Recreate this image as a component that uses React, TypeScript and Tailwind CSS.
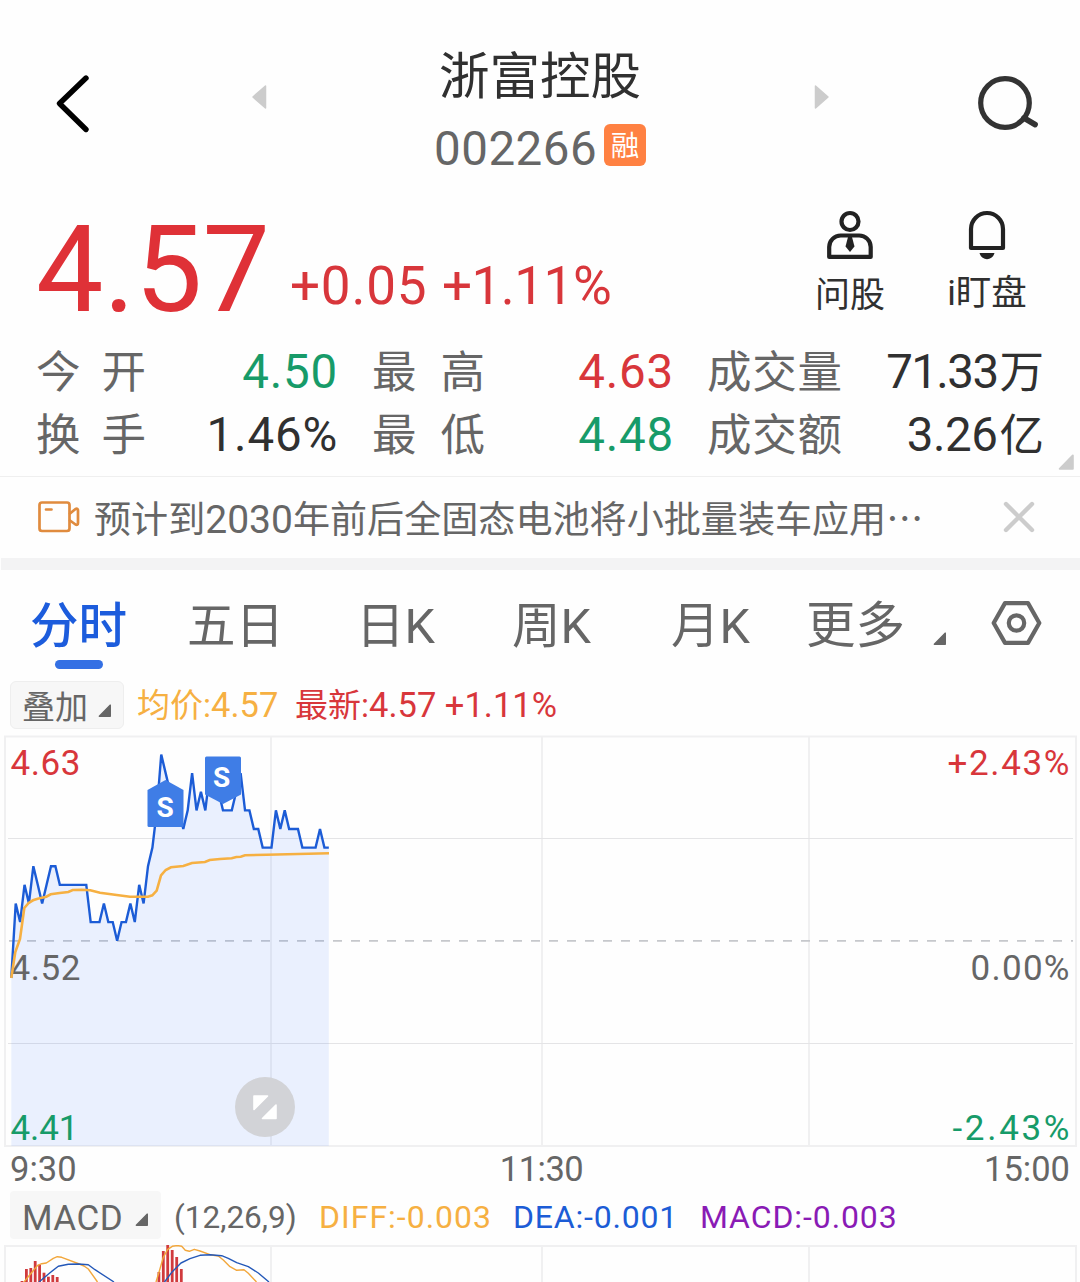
interface Stat {
  label: string
  value: string
  unit?: string
  style: string
}

const STATS: Stat[][] = [
  [
    { label: '今开', value: '4.50', style: 'text-[#179b69] tracking-[0.8px] mr-[-1px]' },
    { label: '最高', value: '4.63', style: 'text-[#d8363b] tracking-[0.8px] mr-[-1px]' },
    { label: '成交量', value: '71.33', unit: '万', style: 'text-[#303030] tracking-[-1.6px]' },
  ],
  [
    { label: '换手', value: '1.46%', style: 'text-[#303030] tracking-[0.8px] mr-[-1px]' },
    { label: '最低', value: '4.48', style: 'text-[#179b69] tracking-[0.8px] mr-[-1px]' },
    { label: '成交额', value: '3.26', unit: '亿', style: 'text-[#303030] tracking-[-0.5px]' },
  ],
]

const COLUMNS = [
  'w-[301px]',
  'ml-[35px] w-[301px]',
  'ml-[34px] w-[337px]',
]

const TABS = [
  { name: '五日', width: 'w-[169px]' },
  { name: '日K', width: 'w-[156px]' },
  { name: '周K', width: 'w-[159px]' },
  { name: '月K', width: 'w-[154px]' },
]

// price ticks (0.01) relative to the previous close, one per minute
const PREV_CLOSE = 4.52
const TICKS = [
  -2, 2, 1, 3, 2, 4, 3, 2, 3, 4, 4, 3, 3, 3, 3, 3, 3, 3, 1, 1, 1, 2, 1, 1, 0,
  1, 1, 2, 1, 3, 2, 4, 5, 7, 10, 9, 8, 7, 7, 6, 7, 9, 7, 8, 7, 9, 9, 8, 7, 7,
  7, 8, 9, 7, 7, 6, 6, 5, 5, 5, 7, 6, 7, 6, 6, 6, 5, 5, 5, 5, 6, 5, 5,
]
const STEP = 4.41
const TICK_H = 18.62
const ZERO_Y = 940.7

const pricePoints = TICKS.map((t, i) => `${11.3 + i * STEP},${ZERO_Y - t * TICK_H}`).join(' ')
const lastX = 11.3 + (TICKS.length - 1) * STEP

const AVG_POINTS =
  '11.3,978 15.3,952 20,939 24.3,908 28.7,903 33,900.3 37.7,898.7 46.3,896.7 50.7,894.3 59.7,893 68.3,892 72.7,890 81.7,889.7 90.3,890.3 100,892.7 116.7,895 130,896.7 148,896.7 152.3,895.3 156.7,890.7 161,875.3 165.7,870 171,867.3 183.3,866 192,863 205,862 209.7,860 220,859 231.7,858.3 236.3,857 240.7,856.7 245,855.3 266.7,854.7 329,853.3'

const MACD_BARS = [
  [22, 1281], [26.4, 1269], [30.8, 1268], [35.2, 1261], [39.6, 1264.7], [44, 1272.7],
  [48.4, 1276.7], [52.8, 1275], [57.2, 1277], [158.9, 1272], [163.3, 1251], [167.7, 1245],
  [172.2, 1250], [176.7, 1257], [181.3, 1269],
]

const GRID_X = [271, 542, 809]

function Corner({ className, color = '#666' }: { className?: string; color?: string }) {
  return (
    <svg className={className} width="14" height="14" viewBox="0 0 14 14">
      <path d="M12.2 1.2v11H1.4z" fill={color} stroke={color} strokeWidth="1.6" strokeLinejoin="round" />
    </svg>
  )
}

function Header() {
  return (
    <header className="flex h-[196px] items-start">
      <button className="ml-[52px] mt-[70px]">
        <svg width="42" height="68" viewBox="52 70 42 68" fill="none">
          <path d="M86 78 59.5 103.500 86 129.500" stroke="#000" strokeWidth="5.4" strokeLinecap="round" strokeLinejoin="round" />
        </svg>
      </button>
      <svg className="ml-[157px] mt-[84px]" width="16" height="26" viewBox="0 0 16 26">
        <path d="M14.500 2v22L2 13z" fill="#ccc" stroke="#ccc" strokeWidth="1.500" strokeLinejoin="round" />
      </svg>
      <div className="ml-[167px] flex w-[212px] flex-col items-center pt-[41px]">
        <h1 className="whitespace-nowrap text-[50.500px] leading-[72px] text-[#303030]">浙富控股</h1>
        <div className="flex w-[212px] items-start pt-[1px]">
          <span className="w-[170px] text-[47.500px] leading-[70px] tracking-[0.5px] text-[#666]">002266</span>
          <span className="mt-[10px] h-[42px] w-[42px] shrink-0 rounded-[6px] bg-[#ff8142] text-center text-[28.500px] leading-[46px] text-white">
            融
          </span>
        </div>
      </div>
      <svg className="ml-[168px] mt-[84px]" width="16" height="26" viewBox="0 0 16 26">
        <path d="M1.500 2v22L14 13z" fill="#ccc" stroke="#ccc" strokeWidth="1.500" strokeLinejoin="round" />
      </svg>
      <button className="ml-[146px] mt-[72px]">
        <svg width="66" height="62" viewBox="976 72 66 62" fill="none" stroke="#333">
          <circle cx="1005" cy="103" r="24.300" strokeWidth="5.200" />
          <path d="M1024 118 1035 124.500" strokeWidth="5.800" strokeLinecap="round" />
        </svg>
      </button>
    </header>
  )
}

function PriceBlock() {
  return (
    <section className="flex h-[144px] items-start">
      <span className="ml-[36px] w-[254px] pt-[4px] text-[120px] leading-[140px] text-[#df3137]">4.57</span>
      <div className="flex w-[524px] whitespace-nowrap pt-[60px] text-[53px] leading-[60px] text-[#d8363b]">
        <span className="w-[152px] tracking-[0.800px]">+0.05</span>
        <span className="tracking-[-0.500px]">+1.11%</span>
      </div>
      <div className="flex w-[72px] flex-col items-center pt-[12px] text-[35px] leading-[40px] text-[#303030]">
        <svg width="52" height="54" viewBox="824 208 52 54" fill="none" stroke="#222" strokeWidth="4.200">
          <circle cx="850" cy="221.500" r="8.500" />
          <path d="M829.200 256.900V247a11.500 11.500 0 0 1 11.500-11.500h18.500A11.500 11.500 0 0 1 870.700 247v9.900z" strokeLinejoin="round" />
          <path d="M848 237h4l2.500 9.500-4.500 5.500-4.500-5.500z" fill="#222" stroke="none" />
        </svg>
        <span className="mt-[14px] whitespace-nowrap">问股</span>
      </div>
      <div className="ml-[58px] flex w-[86px] flex-col items-center pt-[12px] text-[35.500px] leading-[40px] text-[#303030]">
        <svg width="44" height="54" viewBox="965 208 44 54" fill="none">
          <path d="M971 248V229a16 16 0 0 1 32 0v19z" stroke="#222" strokeWidth="4.200" strokeLinejoin="round" />
          <path d="M979.500 253h15c-1 4-4 6.200-7.500 6.200s-6.500-2.200-7.500-6.200z" fill="#222" />
        </svg>
        <span className="mt-[11px] whitespace-nowrap">i盯盘</span>
      </div>
    </section>
  )
}

function Stats() {
  return (
    <section className="relative h-[137px] border-b border-[#efefef] pl-[36px] pt-[1px]">
      {STATS.map((row) => (
        <div key={row[0].label} className="flex h-[63px] items-center">
          {row.map((s, i) => (
            <div key={s.label} className={`flex items-center justify-between whitespace-nowrap leading-[63px] ${COLUMNS[i]}`}>
              <span className={`flex justify-between pt-[1px] text-[44.500px] text-[#666] ${i === 0 ? 'w-[110px]' : i === 1 ? 'w-[113px]' : 'w-[135px]'}`}>
                {s.label.split('').map((c) => <span key={c}>{c}</span>)}
              </span>
              <span className={`text-[47.500px] ${s.style}`}>
                {s.value}
                {s.unit && <span className="ml-[2px] text-[44.500px] tracking-normal">{s.unit}</span>}
              </span>
            </div>
          ))}
        </div>
      ))}
      <Corner className="absolute bottom-[5px] right-[5px] h-[17px] w-[17px]" color="#ccc" />
    </section>
  )
}

function NewsBar() {
  return (
    <section className="flex h-[81px] items-center pb-[1px] pl-[36px]">
      <svg width="46" height="36" viewBox="36 499 46 36" fill="none" stroke="#e08b3e" strokeWidth="2.700" strokeLinecap="round" strokeLinejoin="round">
        <rect x="39.500" y="502.500" width="30" height="28.500" rx="2.500" />
        <path d="M46 509.500h5.500M70 513.500l5.500-4.500q2.500-1 2.500 1.500v12.500q0 2.500-2.500 1.500L70 520.500" />
      </svg>
      <p className="ml-[12px] w-[909px] whitespace-nowrap pt-[4px] text-[37.100px] leading-[50px] text-[#666]">
        预计到<span className="text-[39px]">2030</span>年前后全固态电池将小批量装车应用
        <span className="font-['Noto_Sans_CJK_SC',sans-serif]">…</span>
      </p>
      <svg width="32" height="32" viewBox="0 0 32 32" stroke="#ccc" strokeWidth="4.400" strokeLinecap="round">
        <path d="M3 3l26 26M29 3 3 29" />
      </svg>
    </section>
  )
}

function Tabs() {
  return (
    <nav className="flex h-[111px] items-start text-[48.500px] leading-[113px] text-[#666]">
      <div className="ml-[30px] flex w-[157px] flex-col items-start font-medium text-[#1c5cdc]">
        <span className="h-[90px]">分时</span>
        <span className="ml-[25px] h-[9px] w-[48px] rounded-full bg-[#3470e4]" />
      </div>
      {TABS.map((t) => (
        <span key={t.name} className={`shrink-0 whitespace-nowrap ${t.width}`}>{t.name}</span>
      ))}
      <span className="ml-[-19px] w-[127px] shrink-0 text-[49.500px]">更多</span>
      <Corner className="mt-[62px] shrink-0" />
      <svg className="ml-[42px] mt-[28px] shrink-0" width="54" height="50" viewBox="989 598 54 50" fill="none" stroke="#666" strokeWidth="4.200" strokeLinejoin="round">
        <path d="M993.700 623 1005 603.100h23L1039.300 623 1028 642.900h-23z" />
        <circle cx="1016.500" cy="623" r="7.700" />
      </svg>
    </nav>
  )
}

function MinuteChart() {
  return (
    <svg className="block" width="1080" height="413" viewBox="0 735 1080 413" fontSize="35">
      <g stroke="#f0f0f1" strokeWidth="2" fill="none">
        <rect x="5" y="736.500" width="1071" height="409.500" />
        {GRID_X.map((x) => <path key={x} d={`M${x} 737v408`} />)}
      </g>
      <path d="M8 838.500h1065M8 1043.500h1065" stroke="#e4e4e6" />
      <path d="M8 940.800h1065" stroke="#c6c8cc" strokeWidth="1.800" strokeDasharray="9 9" strokeDashoffset="-1" />
      <polygon points={`11.300,1146 ${pricePoints} ${lastX},1146`} fill="#2b6bff" fillOpacity="0.095" />
      <text x="10.500" y="980" fill="#666" textLength="70">{PREV_CLOSE}</text>
      <polyline points={pricePoints} fill="none" stroke="#1c5cd6" strokeWidth="2.400" />
      <polyline points={AVG_POINTS} fill="none" stroke="#f6b042" strokeWidth="2.600" />

      <text x="10.500" y="775" fill="#d8363b" textLength="70">4.63</text>
      <text x="10.500" y="1140" fill="#179b69" textLength="68">4.41</text>
      <text x="1069.500" y="775" fill="#d8363b" textAnchor="end" textLength="122">+2.43%</text>
      <text x="1069.500" y="980" fill="#666" textAnchor="end" textLength="99">0.00%</text>
      <text x="1069.500" y="1140" fill="#179b69" textAnchor="end" textLength="117">-2.43%</text>

      <path d="M147.500 790 165.500 780l18 10v35.500q0 1.500-1.500 1.500h-33q-1.500 0-1.500-1.500z" fill="#3f7de6" />
      <path d="M205 758q0-1.500 1.500-1.500h33q1.500 0 1.500 1.500v36.500l-18 9.500-18-9.500z" fill="#3f7de6" />
      <g fill="#fff" fontSize="28" fontWeight="700" textAnchor="middle">
        <text x="165" y="817">S</text>
        <text x="221.500" y="787">S</text>
      </g>

      <circle cx="265" cy="1107" r="30" fill="#d2d3d7" />
      <path d="M254 1096h13.500l-13.500 13.500zM276 1105v13.500h-13.500z" fill="#fff" stroke="#fff" strokeWidth="1.600" strokeLinejoin="round" />
    </svg>
  )
}

function MacdChart() {
  return (
    <svg className="block" width="1080" height="37" viewBox="0 1245 1080 37">
      <g stroke="#f0f0f1" strokeWidth="2" fill="none">
        <path d="M5 1290V1246h1071v44" />
        {GRID_X.map((x) => <path key={x} d={`M${x} 1247v40`} />)}
      </g>
      {MACD_BARS.map(([x, y]) => (
        <rect key={x} x={x - 1.4} y={y} width="2.800" height={1290 - y} fill="#d03a3d" />
      ))}
      <g fill="none" strokeWidth="1.400" strokeLinejoin="round">
        <path
          d="M24 1282 30.700 1273.700 37.700 1265.300 41.700 1263.700 46.300 1263 53.300 1258.300 57.300 1256.700 61.700 1257.300 79.300 1264 84 1266 88.300 1269 97.500 1282M156 1282 158.700 1273.300 163.300 1257.300 167.700 1249.300 172.300 1246.300 177.300 1245.500 181.700 1246.300 185.300 1250.300 189.300 1251.300 194.300 1249.300 200 1251 210 1254.700 218.300 1256 223.300 1260 230 1266.700 236.700 1270.300 244 1269.700 248.300 1273.300 256.500 1282"
          stroke="#f2a73c"
        />
        <path
          d="M39 1282 50 1272.700 58.300 1266.300 68.300 1264.300 78.300 1264 88.300 1264.700 95 1269.700 114 1282M164.500 1282 172.300 1271.700 181 1263 190 1258.700 200 1255.300 210 1254.700 221.700 1255.700 228.300 1258.300 236.700 1262.700 248.300 1266.700 258.300 1273 269 1282"
          stroke="#2458b8"
        />
      </g>
    </svg>
  )
}

export default function App() {
  return (
    <div className="h-[1282px] w-[1080px] overflow-hidden bg-[#fefefe] font-[Roboto,'Noto_Sans_CJK_SC',sans-serif]">
      <Header />
      <PriceBlock />
      <Stats />
      <NewsBar />
      <div className="ml-[1px] h-[12px] bg-[#f3f3f4]" />
      <Tabs />

      <div className="flex h-[54px] items-start whitespace-nowrap text-[33px] leading-[48px]">
        <div className="ml-[10px] flex h-[48px] w-[114px] rounded-[6px] border border-[#eee] bg-[#f7f7f7] pl-[11px] leading-[51px] text-[#666]">
          叠加
          <Corner className="ml-[10px] mt-[22px]" />
        </div>
        <span className="ml-[13px] w-[158px] text-[#f6b042]">均价:<span className="text-[34.500px]">4.57</span></span>
        <span className="text-[#d8363b]">最新:<span className="text-[34.500px]">4.57 +1.11%</span></span>
      </div>

      <MinuteChart />

      <div className="flex h-[43px] justify-between px-[10px] text-[34.500px] leading-[42px] text-[#666]">
        <span className="w-[90px]">9:30</span>
        <span className="ml-[3px] tracking-[-0.5px]">11:30</span>
        <span className="w-[90px] text-right">15:00</span>
      </div>

      <div className="flex h-[54px] items-start whitespace-nowrap text-[32px] leading-[53px] text-[#666]">
        <div className="ml-[10px] flex h-[48px] w-[151px] rounded-[4px] bg-[#f7f7f7] pl-[12px] text-[35px] leading-[55px] tracking-[0.5px]">
          MACD
          <Corner className="ml-[12px] mt-[22px]" />
        </div>
        <span className="ml-[13px] w-[145px] text-[31.500px]">(12,26,9)</span>
        <span className="w-[194px] text-[#f6b042] tracking-[1px]">DIFF:-0.003</span>
        <span className="w-[187px] text-[#1c5cd6] tracking-[0.8px]">DEA:-0.001</span>
        <span className="text-[#8a1bb5] tracking-[0.9px]">MACD:-0.003</span>
      </div>

      <MacdChart />
    </div>
  )
}
